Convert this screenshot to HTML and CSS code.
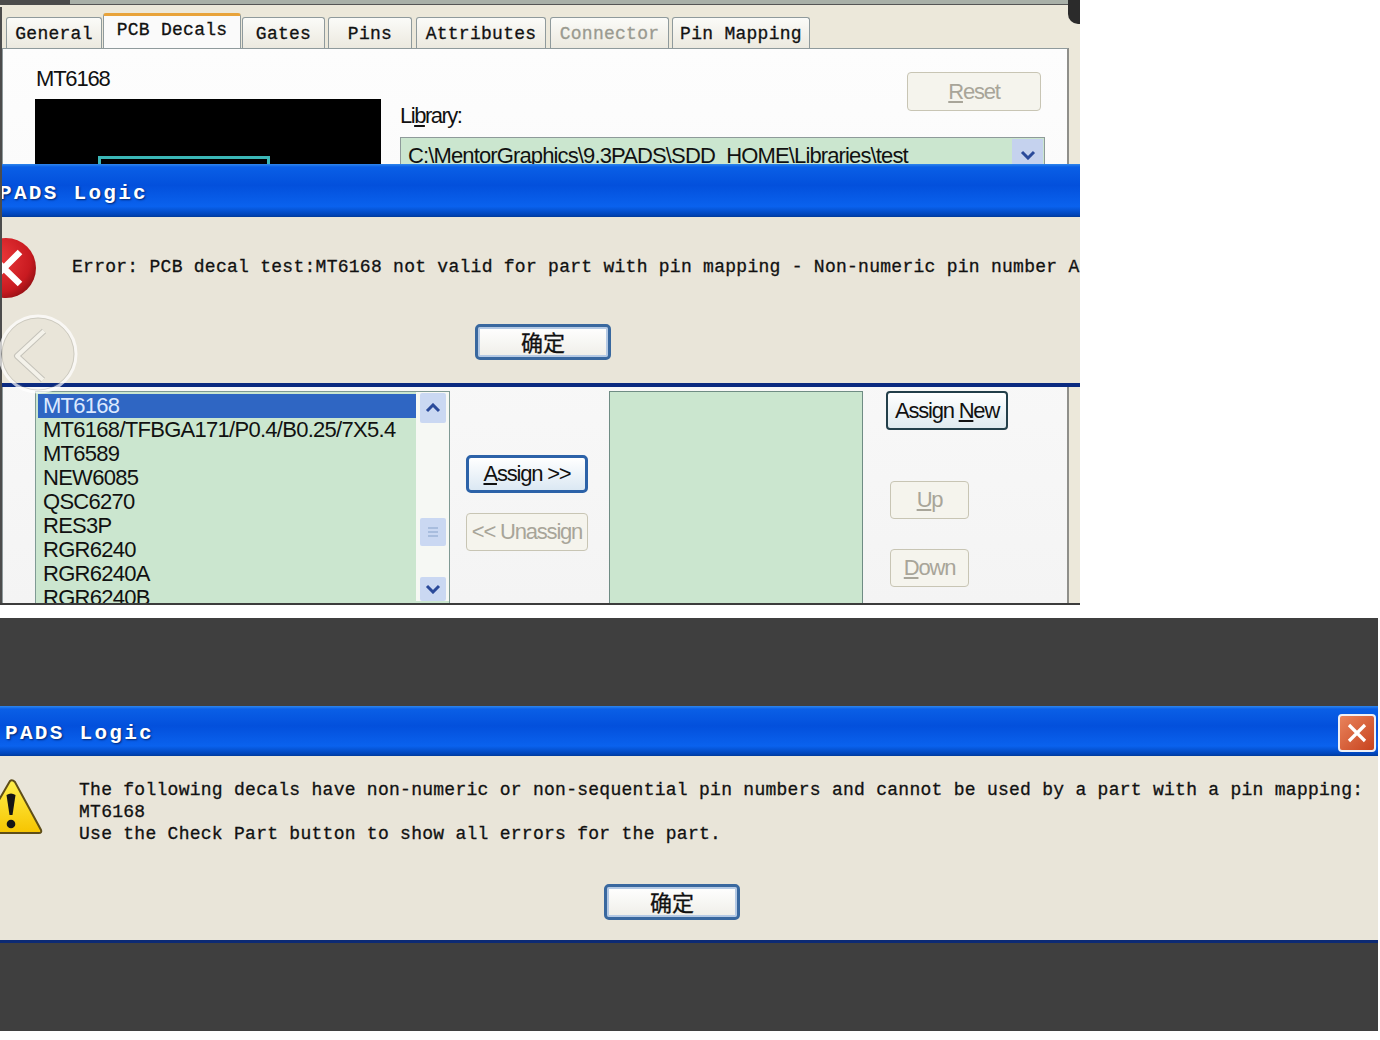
FILE: index.html
```html
<!DOCTYPE html>
<html lang="en">
<head>
<meta charset="utf-8">
<title>PADS Logic</title>
<link rel="stylesheet" href="styles.css">
</head>
<body>
<section class="shot-top">
  <div class="titlestrip"><span class="strip-fill"></span></div>
  <span class="corner"></span>
  <nav class="tabs">
    <span class="tab tab-general">General</span>
    <span class="tab tab-active">PCB Decals</span>
    <span class="tab tab-gates">Gates</span>
    <span class="tab tab-pins">Pins</span>
    <span class="tab tab-attr">Attributes</span>
    <span class="tab tab-conn">Connector</span>
    <span class="tab tab-map">Pin Mapping</span>
  </nav>
  <div class="panel">
    <div class="panel-top">
      <div class="preview-col">
        <div class="part-name">MT6168</div>
        <div class="preview"><span class="decal"></span></div>
      </div>
      <div class="library-col">
        <div class="library-head">
          <label class="library-label">Li<u>b</u>rary:</label>
          <button class="btn btn-off btn-reset"><u>R</u>eset</button>
        </div>
        <div class="combo">
          <span class="combo-text">C:\MentorGraphics\9.3PADS\SDD_HOME\Libraries\test</span>
          <span class="combo-arrow"><svg width="16" height="10" viewBox="0 0 16 10"><path d="M2 2l6 6 6-6" fill="none" stroke="#2a4a9a" stroke-width="3"/></svg></span>
        </div>
      </div>
    </div>
    <div class="panel-bottom">
      <div class="listbox">
        <ul class="rows">
          <li class="row row-sel">MT6168</li>
          <li class="row">MT6168/TFBGA171/P0.4/B0.25/7X5.4</li>
          <li class="row">MT6589</li>
          <li class="row">NEW6085</li>
          <li class="row">QSC6270</li>
          <li class="row">RES3P</li>
          <li class="row">RGR6240</li>
          <li class="row">RGR6240A</li>
          <li class="row">RGR6240B</li>
        </ul>
        <div class="scrollbar">
          <span class="sb-btn"><svg width="16" height="10" viewBox="0 0 16 10"><path d="M2 8l6-6 6 6" fill="none" stroke="#2a4a9a" stroke-width="3"/></svg></span>
          <span class="sb-thumb"><svg width="12" height="10" viewBox="0 0 12 10"><path d="M1 1h10M1 5h10M1 9h10" stroke="#9db4d8" stroke-width="1.500"/></svg></span>
          <span class="sb-btn"><svg width="16" height="10" viewBox="0 0 16 10"><path d="M2 2l6 6 6-6" fill="none" stroke="#2a4a9a" stroke-width="3"/></svg></span>
        </div>
      </div>
      <div class="assign-col">
        <button class="btn btn-default btn-assign"><u>A</u>ssign &gt;&gt;</button>
        <button class="btn btn-off btn-assign">&lt;&lt; Unassign</button>
      </div>
      <div class="listbox-empty"></div>
      <div class="order-col">
        <button class="btn btn-dark btn-new">Assign <u>N</u>ew</button>
        <button class="btn btn-off btn-up"><u>U</u>p</button>
        <button class="btn btn-off btn-down"><u>D</u>own</button>
      </div>
    </div>
  </div>

  <div class="dialog dialog-error">
    <header class="dlg-title dlg-title-1">PADS Logic</header>
    <div class="dlg-body">
      <svg class="icon-error" width="38" height="62" viewBox="0 0 38 62">
        <defs><radialGradient id="er" cx="0.35" cy="0.35" r="0.8"><stop offset="0" stop-color="#ee3a3c"/><stop offset=".7" stop-color="#c81a20"/><stop offset="1" stop-color="#7e0c10"/></radialGradient></defs>
        <circle cx="6" cy="30" r="30" fill="url(#er)"/>
        <path d="M-12 15L20 46M20 14L-12 46" stroke="#fff" stroke-width="6.500"/>
      </svg>
      <p class="msg msg-error">Error: PCB decal test:MT6168 not valid for part with pin mapping - Non-numeric pin number A</p>
    </div>
    <div class="dlg-actions"><button class="xp-ok">确定</button></div>
  </div>

  <div class="nav-ghost"><svg width="84" height="84" viewBox="0 0 84 84">
    <circle cx="41" cy="41" r="38" fill="none" stroke="#fff" stroke-opacity=".7" stroke-width="3"/>
    <circle cx="41" cy="41" r="36" fill="none" stroke="#8a8a86" stroke-opacity=".3" stroke-width="1"/>
    <path d="M47 18L20 43l26 24" fill="none" stroke="#9a9a94" stroke-opacity=".45" stroke-width="6" stroke-linejoin="round"/>
    <path d="M47 18L20 43l26 24" fill="none" stroke="#f4f2ea" stroke-width="4" stroke-linejoin="round"/>
  </svg></div>
</section>

<section class="shot-bottom">
  <div class="dialog-warning">
    <header class="dlg-title dlg-title-2">PADS Logic
      <span class="close-x"><svg width="22" height="22" viewBox="0 0 22 22"><path d="M3 3l16 16M19 3L3 19" stroke="#fff" stroke-width="3.200"/></svg></span>
    </header>
    <div class="dlg-body-2">
      <svg class="icon-warn" width="44" height="60" viewBox="0 0 44 60">
        <defs><linearGradient id="wn" x1="0" y1="0" x2="0" y2="1"><stop offset="0" stop-color="#fff04c"/><stop offset="1" stop-color="#f6c400"/></linearGradient></defs>
        <path d="M10 2L-20 54h59q3 0 2-3L15 3q-3-3-5-1z" fill="url(#wn)" stroke="#5f4e18" stroke-width="2"/>
        <path d="M6.500 16q4.500-3 9 0l-3 20h-3z" fill="#151515"/><circle cx="11" cy="45" r="4.300" fill="#151515"/>
      </svg>
      <p class="msg msg-warn">The following decals have non-numeric or non-sequential pin numbers and cannot be used by a part with a pin mapping:<br>MT6168<br>Use the Check Part button to show all errors for the part.</p>
    </div>
    <div class="dlg-actions-2"><button class="xp-ok">确定</button></div>
  </div>
</section>
</body>
</html>
```

FILE: styles.css
```css
* { box-sizing: border-box; }
html, body { margin: 0; padding: 0; background: #fff; }
body { width: 1380px; height: 1040px; overflow: hidden; font-family: "Liberation Sans", Arial, sans-serif; color: #111; }
ul { list-style: none; margin: 0; padding: 0; }
p { margin: 0; }
u { text-underline-offset: 2px; }

.shot-top { position: relative; width: 1080px; height: 605px; overflow: hidden; background: #ece8da; border-bottom: 2px solid #3c3c3c; box-shadow: inset 2px 0 #4c4c4c; }
.titlestrip { height: 7px; background: linear-gradient(#4c4c4c 5px, #ece8da 5px); }
.strip-fill { display: block; height: 5px; margin-left: 70px; margin-right: 10px; background: #a9b0a8; border-bottom: 1px solid #555; }
.corner { position: absolute; right: 0; top: 0; width: 12px; height: 24px; background: #2b2b2b; border-bottom-left-radius: 10px; }

.tabs { display: flex; align-items: flex-end; height: 41px; padding-left: 6px; }
.tab { display: block; height: 31px; margin-right: 3px; padding-top: 5px; text-align: center; font: 18px/22px "Liberation Mono", monospace; letter-spacing: .27px; white-space: nowrap; color: #111; background: linear-gradient(#fbfbf8, #ece9df); border: 1px solid #8f9a9c; border-bottom: 0; border-radius: 3px 3px 0 0; -webkit-text-stroke: .3px currentColor; }
.tab-general { width: 96px; margin-right: 1px; }
.tab-active { width: 138px; height: 35px; margin-right: 1px; padding-top: 3px; background: #fafafa; border-top: 3px solid #e8a33a; position: relative; z-index: 1; }
.tab-gates { width: 83px; }
.tab-pins { width: 84px; margin-right: 4px; }
.tab-attr { width: 130px; margin-right: 4px; }
.tab-conn { width: 119px; color: #9a9a90; margin-right: 3px; }
.tab-map { width: 138px; }

.panel { width: 1067px; height: 556px; margin-left: 2px; background: linear-gradient(#fdfdfd, #f4f4f4); border: 1px solid #8f9a9c; border-right: 2px solid #8f8f8a; border-bottom: 0; }
.panel-top { display: flex; height: 342px; overflow: hidden; padding-left: 32px; }
.preview-col { width: 346px; }
.part-name { height: 50px; padding: 17px 0 0 1px; font-size: 22px; line-height: 26px; letter-spacing: -1.2px; }
.preview { position: relative; height: 200px; background: #000; }
.decal { position: absolute; left: 63px; top: 57px; width: 172px; height: 60px; border: 3px solid #3bb7b7; }
.library-col { width: 645px; margin-left: 19px; }
.library-head { display: flex; justify-content: space-between; align-items: flex-start; height: 88px; padding-top: 23px; }
.library-label { margin-top: 31px; font-size: 22px; line-height: 26px; letter-spacing: -1.5px; }
.btn { display: block; padding: 0; background: linear-gradient(#fff, #ecebe4); font-family: "Liberation Sans", Arial, sans-serif; font-size: 22px; white-space: nowrap; color: #111; border-radius: 4px; letter-spacing: -1.2px; }
.btn-off { color: #a8a599; background: #f5f4ed; border: 1px solid #c8c5b4; }
.btn-reset { width: 134px; height: 39px; margin-right: 4px; }
.combo { display: flex; height: 60px; background: #cbe6cf; border: 1px solid #8e9a9a; }
.combo-text { flex: 1; padding: 4px 0 0 7px; font-size: 22px; line-height: 28px; letter-spacing: -.87px; white-space: nowrap; }
.combo-arrow { display: flex; justify-content: center; width: 31px; margin: 1px; padding-top: 11px; background: #c5d2ee; }

.panel-bottom { display: flex; height: 212px; }
.listbox { display: flex; width: 415px; height: 212px; margin-left: 32px; padding: 2px; background: #cbe6cf; border: 1px solid #7f9a94; border-bottom: 0; overflow: hidden; }
.rows { flex: 1; overflow: hidden; height: 210px; }
.row { height: 24px; padding-left: 5px; font-size: 22px; line-height: 24px; letter-spacing: -.72px; white-space: nowrap; }
.row-sel { background: #2f66c3; color: #dce9ff; margin-top: 0; }
.scrollbar { display: flex; flex-direction: column; width: 33px; margin: -2px -2px 0 0; padding: 1px 3px 0 4px; background: #f6f8f4; }
.sb-btn { display: flex; justify-content: center; align-items: center; flex: none; height: 30px; background: #cad8f2; border-radius: 2px; }
.sb-btn:last-child { height: 24px; margin-top: auto; }
.sb-thumb { display: flex; justify-content: center; align-items: center; height: 28px; margin-top: 95px; background: #cad8f2; border-radius: 2px; }

.assign-col { display: flex; flex-direction: column; gap: 20px; width: 159px; padding: 64px 0 0 16px; }
.btn-assign { width: 122px; height: 38px; }
.btn-default { border: 3px solid #2c62a8; border-radius: 5px; background: linear-gradient(#fff, #dbe8f3); }
.listbox-empty { width: 254px; height: 212px; background: #cbe6cf; border: 1px solid #6f8c84; border-bottom: 0; }
.order-col { display: flex; flex-direction: column; align-items: flex-start; padding-left: 23px; }
.btn-new { width: 122px; height: 39px; margin-top: 0; border: 2px solid #233f4a; background: linear-gradient(#fff, #dfeaef); }
.btn-up { width: 79px; height: 38px; margin: 51px 0 0 4px; }
.btn-down { width: 79px; height: 38px; margin: 30px 0 0 4px; }

.dialog { position: absolute; left: 2px; top: 164px; width: 1078px; height: 223px; background: #e9e5d9; border-bottom: 4px solid #0a2a80; overflow: hidden; }
.dlg-title { height: 53px; font: bold 21px/60px "Liberation Mono", monospace; letter-spacing: 2.3px; color: #fff; text-shadow: 1px 1px 2px #00246e; white-space: nowrap; background: linear-gradient(#2f86ec 0, #0a5fe6 3px, #0350dc 40%, #0a62ee 80%, #0044b8 96%, #003a9a 100%); }
.dlg-title-1 { text-indent: -3px; }
.dlg-body { display: flex; height: 107px; margin-left: -2px; padding-top: 21px; }
.icon-error { flex: none; }
.msg { font: 18px/22px "Liberation Mono", monospace; letter-spacing: .27px; color: #111; white-space: nowrap; -webkit-text-stroke: .3px #111; }
.msg-error { margin: 18px 0 0 34px; }
.dlg-actions { padding-left: 473px; }
.xp-ok { display: block; width: 136px; height: 36px; padding: 0 0 3px; font: 22px/28px "Noto Sans CJK SC", sans-serif; -webkit-text-stroke: .3px #111; color: #111; background: linear-gradient(#fff, #efeee8); border: 3px solid #39689f; border-radius: 5px; box-shadow: inset 0 0 0 2px #b4c9e4; }
.nav-ghost { position: absolute; left: -3px; top: 313px; }

.shot-bottom { width: 1378px; height: 413px; margin-top: 13px; padding-top: 88px; background: #3f3f3f; }
.dialog-warning { height: 237px; background: #e9e5d9; border-bottom: 3px solid #0c2a74; overflow: hidden; }
.dlg-title-2 { display: flex; justify-content: space-between; height: 50px; padding: 0 2px 0 5px; line-height: 55px; }
.close-x { display: flex; align-items: center; justify-content: center; width: 38px; height: 38px; margin-top: 8px; background: linear-gradient(135deg, #e8835c, #c8431e); border: 2px solid #eef0f6; border-radius: 4px; }
.dlg-body-2 { display: flex; height: 128px; padding-top: 22px; }
.icon-warn { flex: none; margin-top: 1px; }
.msg-warn { margin: 1px 0 0 35px; }
.dlg-actions-2 { padding-left: 604px; }
```
